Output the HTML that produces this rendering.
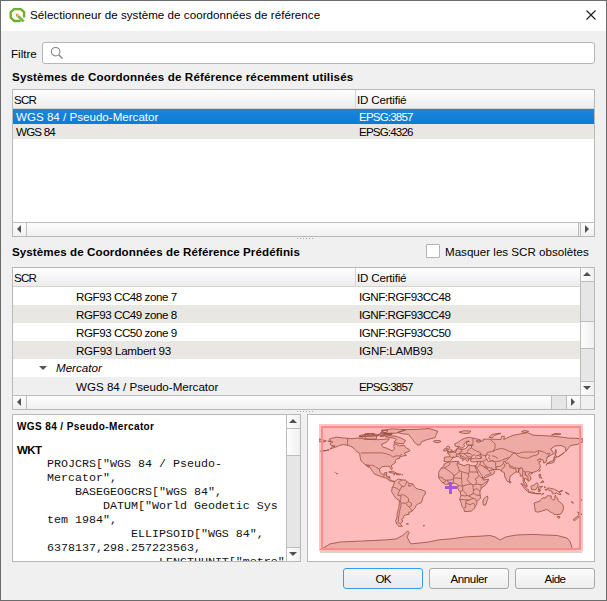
<!DOCTYPE html>
<html><head><meta charset="utf-8">
<style>
*{box-sizing:border-box;margin:0;padding:0}
html,body{width:607px;height:601px;overflow:hidden;background:#f0f0f0}
body{position:relative;font-family:"Liberation Sans",sans-serif;font-size:11.6px;color:#000}
.a{position:absolute}
.t{position:absolute;white-space:nowrap;line-height:14px}
.b{font-weight:bold}
#win{left:0;top:0;width:607px;height:601px;border:1px solid #6c6c6c}
#title{left:1px;top:1px;width:605px;height:30px;background:#fff}
.frame{position:absolute;border:1px solid #b8b8b8;background:#fff}
.hdr{position:absolute;background:linear-gradient(#fff,#ececec);border-bottom:1px solid #d6d2cc}
.sbh{position:absolute;height:14px;border-top:1px solid #bdbdbd;background:#f0f0f0}
.sbv{position:absolute;width:14px;border-left:1px solid #bdbdbd;background:#e6e6e6}
.bh{position:absolute;background:linear-gradient(#fdfdfd,#f0f0f0)}
.bv{position:absolute;background:linear-gradient(90deg,#fdfdfd,#f0f0f0)}
.ln{position:absolute;background:#bdbdbd}
.btn{position:absolute;width:80px;height:21px;border:1px solid #a8a8a8;border-radius:3px;background:linear-gradient(#fcfcfc,#ededed);text-align:center;line-height:19px}
.dots{position:absolute;height:1px;width:16px;background:repeating-linear-gradient(90deg,#a8a8a8 0 1px,transparent 1px 3px)}
.mono{position:absolute;white-space:pre;font-family:"Liberation Mono",monospace;font-size:11.67px;line-height:14px;color:#111}
</style></head><body>
<div id="win" class="a"></div>
<div id="title" class="a"></div>
<!-- QGIS logo -->
<svg class="a" style="left:8px;top:7px" width="19" height="17" viewBox="0 0 19 17">
 <path d="M12.6 14 L6.3 14 L2.7 10.7 L2.7 5.1 L6.1 2.1 L12.9 2.1 L16.1 5.1 L16.1 10.4" fill="none" stroke="#6fae2c" stroke-width="2.4" stroke-linejoin="bevel"/>
 <path d="M10 9 L15.6 14.6" stroke="#7cb843" stroke-width="2.8"/>
 <path d="M7.6 6.6 L11 7 L8.2 10.2 Z" fill="#f0902a"/>
</svg>
<div class="t" style="left:30px;top:8px;letter-spacing:0.04px">Sélectionneur de système de coordonnées de référence</div>
<svg class="a" style="left:585px;top:9px" width="13" height="13" viewBox="0 0 13 13">
 <path d="M1.5 1.5 L10.5 10.5 M10.5 1.5 L1.5 10.5" stroke="#1a1a1a" stroke-width="1.1"/>
</svg>

<!-- Filter -->
<div class="t" style="left:11px;top:47px">Filtre</div>
<div class="a" style="left:42px;top:42px;width:553px;height:22px;border:1px solid #b6b6b6;border-radius:3px;background:#fff"></div>
<svg class="a" style="left:49px;top:46px" width="15" height="15" viewBox="0 0 15 15">
 <circle cx="6.6" cy="5.7" r="4.3" fill="none" stroke="#808080" stroke-width="1.05"/>
 <path d="M9.7 8.8 L13.4 12.5" stroke="#808080" stroke-width="1.3"/>
</svg>

<div class="t b" style="left:12px;top:70px;letter-spacing:0.15px">Systèmes de Coordonnées de Référence récemment utilisés</div>

<!-- Table 1 -->
<div class="frame" style="left:12px;top:89px;width:583px;height:148px"></div>
<div class="hdr" style="left:13px;top:90px;width:581px;height:19px"></div>
<div class="a" style="left:355px;top:90px;width:1px;height:18px;background:#d5d5d5"></div>
<div class="t" style="left:14px;top:93px;letter-spacing:-0.8px">SCR</div>
<div class="t" style="left:357px;top:93px;letter-spacing:-0.2px">ID Certifié</div>
<div class="a" style="left:13px;top:109px;width:581px;height:15px;background:linear-gradient(#1c85da,#0c7cd5)"></div>
<div class="a" style="left:13px;top:124px;width:581px;height:15px;background:#e9e7e3"></div>
<div class="t" style="left:16px;top:110px;color:#fff">WGS 84 / Pseudo-Mercator</div>
<div class="t" style="left:359px;top:110px;color:#fff;letter-spacing:-0.85px">EPSG:3857</div>
<div class="t" style="left:16px;top:125px;letter-spacing:-0.8px">WGS 84</div>
<div class="t" style="left:359px;top:125px;letter-spacing:-0.85px">EPSG:4326</div>
<!-- h scrollbar 1 -->
<div class="sbh" style="left:13px;top:222px;width:581px"></div>
<div class="bh" style="left:13px;top:223px;width:13px;height:13px"></div>
<div class="ln" style="left:26px;top:223px;width:1px;height:13px"></div>
<div class="bh" style="left:27px;top:223px;width:551px;height:13px"></div>
<div class="ln" style="left:578px;top:223px;width:1px;height:13px"></div>
<div class="ln" style="left:580px;top:223px;width:1px;height:13px"></div>
<div class="bh" style="left:581px;top:223px;width:13px;height:13px"></div>
<svg class="a" style="left:13px;top:223px" width="13" height="13"><path d="M4 6 L8 2 L8 10Z" fill="#505050"/></svg>
<svg class="a" style="left:581px;top:223px" width="13" height="13"><path d="M8 6 L4 2 L4 10Z" fill="#505050"/></svg>

<div class="dots" style="left:297px;top:238px"></div>

<div class="t b" style="left:12px;top:245px;letter-spacing:0.08px">Systèmes de Coordonnées de Référence Prédéfinis</div>
<div class="a" style="left:426px;top:244px;width:14px;height:14px;border:1px solid #b2b2b2;border-radius:1px;background:#fff"></div>
<div class="t" style="left:445px;top:245px">Masquer les SCR obsolètes</div>

<!-- Table 2 -->
<div class="frame" style="left:12px;top:267px;width:583px;height:143px"></div>
<div class="hdr" style="left:13px;top:268px;width:567px;height:19px"></div>
<div class="a" style="left:355px;top:268px;width:1px;height:18px;background:#d5d5d5"></div>
<div class="t" style="left:14px;top:271px;letter-spacing:-0.8px">SCR</div>
<div class="t" style="left:357px;top:271px;letter-spacing:-0.2px">ID Certifié</div>
<div class="a" style="left:13px;top:305px;width:567px;height:18px;background:#e9e7e3"></div>
<div class="a" style="left:13px;top:341px;width:567px;height:18px;background:#e9e7e3"></div>
<div class="a" style="left:13px;top:377px;width:567px;height:18px;background:#efefef"></div>
<div class="t" style="left:76px;top:290px;letter-spacing:-0.44px">RGF93 CC48 zone 7</div>
<div class="t" style="left:359px;top:290px;letter-spacing:-0.46px">IGNF:RGF93CC48</div>
<div class="t" style="left:76px;top:308px;letter-spacing:-0.44px">RGF93 CC49 zone 8</div>
<div class="t" style="left:359px;top:308px;letter-spacing:-0.46px">IGNF:RGF93CC49</div>
<div class="t" style="left:76px;top:326px;letter-spacing:-0.44px">RGF93 CC50 zone 9</div>
<div class="t" style="left:359px;top:326px;letter-spacing:-0.46px">IGNF:RGF93CC50</div>
<div class="t" style="left:76px;top:344px;letter-spacing:-0.27px">RGF93 Lambert 93</div>
<div class="t" style="left:359px;top:344px;letter-spacing:-0.15px">IGNF:LAMB93</div>
<svg class="a" style="left:38px;top:365px" width="10" height="6"><path d="M1 1 L9 1 L5 5Z" fill="#555"/></svg>
<div class="t" style="left:56px;top:361px;font-style:italic">Mercator</div>
<div class="t" style="left:76px;top:380px">WGS 84 / Pseudo-Mercator</div>
<div class="t" style="left:359px;top:380px;letter-spacing:-0.85px">EPSG:3857</div>
<!-- v scrollbar 2 -->
<div class="sbv" style="left:580px;top:268px;height:127px"></div>
<div class="bv" style="left:581px;top:268px;width:13px;height:13px"></div>
<div class="ln" style="left:581px;top:281px;width:13px;height:1px"></div>
<div class="ln" style="left:581px;top:321px;width:13px;height:1px"></div>
<div class="bv" style="left:581px;top:322px;width:13px;height:26px"></div>
<div class="ln" style="left:581px;top:348px;width:13px;height:1px"></div>
<div class="ln" style="left:581px;top:381px;width:13px;height:1px"></div>
<div class="bv" style="left:581px;top:382px;width:13px;height:13px"></div>
<svg class="a" style="left:581px;top:268px" width="13" height="13"><path d="M2 8 L10 8 L6 4Z" fill="#505050"/></svg>
<svg class="a" style="left:581px;top:382px" width="13" height="13"><path d="M2 4 L10 4 L6 8Z" fill="#505050"/></svg>
<!-- h scrollbar 2 -->
<div class="sbh" style="left:13px;top:395px;width:581px"></div>
<div class="bh" style="left:13px;top:396px;width:13px;height:13px"></div>
<div class="ln" style="left:26px;top:396px;width:1px;height:13px"></div>
<div class="bh" style="left:27px;top:396px;width:524px;height:13px"></div>
<div class="ln" style="left:551px;top:396px;width:1px;height:13px"></div>
<div class="a" style="left:552px;top:396px;width:14px;height:13px;background:#e6e6e6"></div>
<div class="ln" style="left:566px;top:396px;width:1px;height:13px"></div>
<div class="bh" style="left:567px;top:396px;width:13px;height:13px"></div>
<div class="ln" style="left:580px;top:396px;width:1px;height:13px"></div>
<div class="a" style="left:581px;top:396px;width:13px;height:13px;background:#f0f0f0"></div>
<svg class="a" style="left:13px;top:396px" width="13" height="13"><path d="M4 6 L8 2 L8 10Z" fill="#505050"/></svg>
<svg class="a" style="left:567px;top:396px" width="13" height="13"><path d="M8 6 L4 2 L4 10Z" fill="#505050"/></svg>

<div class="dots" style="left:297px;top:411px"></div>

<!-- Text panel -->
<div class="frame" style="left:12px;top:414px;width:289px;height:148px;overflow:hidden">
 <div class="t b" style="left:4px;top:5px;font-size:10px;letter-spacing:0.4px">WGS 84 / Pseudo-Mercator</div>
 <div class="t b" style="left:4px;top:28px;font-size:11.5px;letter-spacing:-0.6px">WKT</div>
 <div class="mono" style="left:34px;top:42px">PROJCRS["WGS 84 / Pseudo-
Mercator",
    BASEGEOGCRS["WGS 84",
        DATUM["World Geodetic Sys
tem 1984",
            ELLIPSOID["WGS 84",
6378137,298.257223563,
                LENGTHUNIT["metre"</div>
</div>
<div class="sbv" style="left:286px;top:415px;height:146px"></div>
<div class="bv" style="left:287px;top:415px;width:13px;height:13px"></div>
<div class="ln" style="left:287px;top:428px;width:13px;height:1px"></div>
<div class="bv" style="left:287px;top:429px;width:13px;height:26px"></div>
<div class="ln" style="left:287px;top:455px;width:13px;height:1px"></div>
<div class="ln" style="left:287px;top:547px;width:13px;height:1px"></div>
<div class="bv" style="left:287px;top:548px;width:13px;height:13px"></div>
<svg class="a" style="left:287px;top:415px" width="13" height="13"><path d="M2 8 L10 8 L6 4Z" fill="#505050"/></svg>
<svg class="a" style="left:287px;top:548px" width="13" height="13"><path d="M2 4 L10 4 L6 8Z" fill="#505050"/></svg>

<!-- Map panel -->
<div class="frame" style="left:307px;top:414px;width:288px;height:148px"></div>
<svg class="a" style="left:307px;top:414px" width="288" height="148" viewBox="0 0 288 148">
 <rect x="13" y="136" width="262" height="3" fill="#d9d2ca"/>
 <rect x="12" y="10" width="264" height="127" fill="#ffc3c3"/>
 <rect x="14" y="12" width="260" height="123" fill="#ffbcbc"/>
 <clipPath id="cp"><rect x="12" y="10" width="264" height="126"/></clipPath>
 <g clip-path="url(#cp)">
 <path d="M52.3 22.8L56.0 23.2L58.9 21.6L56.0 20.9L52.3 21.6L52.3 22.8ZM57.5 20.2L63.3 20.9L67.7 20.4L66.3 19.5L59.7 19.5L57.5 20.2ZM76.5 20.9L83.9 20.9L85.3 19.9L78.0 19.5L76.5 20.9ZM72.9 22.3L75.8 22.7L78.0 21.4L73.6 21.3L72.9 22.3ZM73.6 18.8L79.5 18.5L80.9 16.7L75.8 16.2L73.6 18.8ZM29.6 60.1L30.5 59.7L29.7 59.2L29.6 60.1ZM27.9 58.5L28.4 58.3L28.1 58.2L27.9 58.5ZM12.0 25.0L15.7 25.9L19.3 26.9L17.9 28.0L12.0 27.6ZM86.6 60.7L88.0 60.8L87.5 60.4L86.6 60.7ZM94.7 60.8L95.9 60.7L95.2 60.4L94.7 60.8ZM99.3 109.8L101.5 109.7L101.1 110.4L99.3 109.8ZM116.1 111.6L117.6 111.7L116.9 112.0L116.1 111.6ZM264.3 87.6L266.5 89.0L266.1 89.2L264.3 88.0ZM274.2 85.8L274.9 85.7L274.8 86.3L274.2 85.8ZM258.4 78.1L261.3 79.5L262.1 80.6L259.1 79.1L258.4 78.1ZM252.5 77.4L255.5 76.3L255.1 77.4L252.9 77.7L252.5 77.4ZM234.6 80.8L237.1 79.4L235.7 79.9L234.6 80.8ZM228.3 79.6L232.0 79.4L234.2 79.5L231.3 79.9L228.3 79.6ZM237.5 72.4L238.2 73.1L237.9 74.1L237.5 72.4ZM237.9 75.6L240.1 75.6L239.3 76.2L237.9 75.6ZM251.1 42.8L254.0 41.0L257.7 38.2L256.9 38.9L251.1 42.8ZM223.6 60.1L225.4 59.6L224.7 59.3L223.6 60.1ZM22.3 35.8L19.3 36.3L15.7 36.8L13.5 37.0L14.9 37.2L19.3 36.6L22.3 35.8ZM23.0 35.0L28.1 33.3L32.5 31.5L36.2 30.5L41.3 31.4L45.0 32.9L47.9 35.4L50.1 37.9L52.7 39.3L53.1 43.2L54.2 47.0L58.2 50.6L60.0 52.0L61.9 53.4L60.4 51.6L61.5 51.3L64.1 55.2L66.6 58.7L67.0 59.7L72.9 62.2L76.5 63.3L79.8 64.3L82.4 66.8L85.7 67.1L87.2 67.9L87.5 67.3L84.6 67.1L83.1 66.1L82.8 62.9L79.5 62.2L79.8 58.3L77.6 58.7L77.3 60.1L75.1 60.4L72.9 58.0L72.5 55.2L75.1 52.7L78.7 52.3L82.4 52.3L83.5 54.4L84.6 55.7L85.3 54.4L84.2 51.6L88.3 48.8L88.3 46.3L89.7 44.9L92.7 44.2L92.7 42.8L95.6 42.1L99.3 41.4L97.1 39.3L100.0 38.2L102.9 36.8L102.2 35.4L99.3 34.0L97.1 31.2L92.7 31.9L87.2 29.4L86.8 32.6L87.5 34.7L85.3 37.2L83.9 36.1L80.2 34.3L76.2 33.3L75.1 31.9L74.7 30.1L79.5 28.3L80.9 26.6L82.4 24.8L78.0 25.2L74.3 25.5L70.7 25.7L64.8 25.5L59.7 25.5L54.5 24.5L50.1 24.1L45.0 24.8L40.6 24.3L35.5 23.9L29.2 23.2L25.2 24.1L22.3 25.2L23.7 26.6L20.8 27.3L25.9 28.0L23.0 29.4L23.7 31.2L28.1 32.2L25.2 32.6L23.0 35.0ZM98.5 26.6L96.3 29.8L91.2 29.4L86.8 28.0L89.7 25.5L86.8 24.1L78.0 22.7L81.7 21.6L89.0 22.3L94.1 24.1L98.5 26.6ZM57.5 24.8L69.2 25.2L69.9 22.0L59.7 21.6L57.5 24.8ZM78.0 19.2L89.0 19.2L98.5 15.6L85.3 14.9L74.3 16.4L78.0 19.2ZM52.3 22.7L59.7 19.9L67.0 19.9L72.1 21.3L63.3 22.3L52.3 22.7ZM70.7 20.9L78.0 20.9L85.3 19.9L74.3 19.2L70.7 20.9ZM90.5 18.5L95.6 19.9L101.5 20.2L103.7 23.4L105.9 25.5L107.3 28.3L111.0 31.2L113.2 30.8L114.7 27.6L120.5 25.5L127.9 23.8L129.3 20.6L130.8 17.1L122.0 14.6L111.0 15.3L100.0 15.6L90.5 18.5ZM126.4 27.3L127.9 26.6L133.0 26.6L134.1 27.6L130.8 28.7L127.9 28.3L126.4 27.3ZM81.7 58.0L85.3 57.1L89.6 59.2L87.2 59.5L81.7 58.0ZM89.4 59.5L93.8 60.2L92.7 60.8L89.4 60.7L89.4 59.5ZM87.2 67.9L91.2 65.0L94.9 65.9L98.5 66.1L100.0 67.5L102.2 69.3L105.9 70.0L107.3 72.2L108.8 74.2L111.7 75.3L115.4 76.0L118.3 77.4L118.3 79.9L116.1 82.7L115.4 85.8L113.9 89.0L111.4 89.7L108.8 91.8L108.4 93.6L105.9 96.1L104.4 97.8L101.8 98.2L102.2 100.3L98.5 101.0L96.3 102.4L96.7 103.5L94.5 106.0L96.0 107.0L93.4 109.5L93.8 110.5L95.6 112.3L91.9 112.3L89.7 110.2L88.6 106.7L90.1 103.1L90.1 99.6L91.6 94.7L92.3 89.7L92.4 86.6L89.0 84.4L86.8 81.3L84.6 77.7L85.0 74.9L85.3 72.8L86.4 71.7L87.2 68.6L87.2 67.9ZM137.0 47.4L137.4 46.0L137.4 43.2L142.5 42.8L142.9 41.0L140.7 39.6L142.9 38.6L145.1 37.9L146.9 37.2L149.9 35.8L150.2 34.3L151.7 32.9L151.7 35.0L154.3 35.4L157.9 35.0L159.4 34.0L161.2 31.5L166.0 31.2L160.5 31.0L159.4 30.5L159.8 28.0L162.3 27.3L160.1 27.1L157.2 29.4L156.8 30.8L157.6 31.9L156.1 33.6L153.5 34.3L152.1 32.2L149.9 32.6L148.0 31.9L147.7 29.8L151.3 28.3L154.3 25.9L157.2 24.5L162.3 23.4L166.0 24.1L168.2 24.6L173.3 25.9L174.1 26.6L168.9 26.9L171.1 28.3L176.3 26.6L176.3 25.2L182.9 25.2L187.3 25.2L193.9 25.5L194.6 22.3L197.5 22.3L196.8 25.5L202.7 22.7L206.3 21.3L213.7 19.9L220.3 18.7L226.9 21.3L235.7 21.6L246.7 22.3L254.0 23.1L261.3 24.1L268.7 24.3L276.0 25.0L276.0 27.6L270.1 30.5L263.5 31.5L258.8 37.5L258.4 33.3L254.0 31.5L248.1 31.9L243.7 35.0L246.7 39.6L240.1 43.4L239.0 48.1L236.8 49.2L236.4 47.0L235.7 45.6L233.1 46.0L233.5 44.7L230.3 46.0L231.6 47.4L233.8 47.4L232.0 49.2L233.3 51.6L233.1 53.7L231.3 55.9L229.4 57.4L225.0 58.7L223.9 58.3L222.1 59.0L221.7 60.8L223.6 62.9L223.9 65.4L221.0 67.4L221.0 66.1L217.7 64.0L217.3 67.5L219.5 69.6L220.3 72.6L218.1 71.5L216.2 67.9L216.1 64.0L215.5 61.9L213.3 62.2L213.2 59.5L211.5 58.3L209.3 58.0L207.4 59.0L202.9 62.6L202.7 66.4L200.8 67.9L199.7 66.4L197.5 61.9L197.4 58.7L195.3 57.6L194.2 57.1L192.8 55.6L189.5 55.7L186.0 55.4L185.3 54.3L181.4 53.7L179.2 52.3L180.7 55.2L181.8 56.4L185.1 56.2L185.3 55.2L187.9 57.6L186.4 60.1L182.5 61.9L177.0 64.3L175.8 64.5L175.3 62.2L172.6 58.3L169.7 53.7L167.8 52.3L169.3 51.3L170.4 49.2L170.4 47.5L166.0 48.0L163.8 47.4L163.3 45.6L165.3 44.6L168.9 43.9L171.9 44.6L174.4 44.2L172.6 42.1L171.1 41.5L169.7 41.8L168.6 42.1L167.1 40.7L165.6 41.5L164.5 43.2L164.5 44.2L163.1 44.7L160.9 45.3L161.6 46.7L160.5 47.7L159.4 46.7L158.3 44.2L153.9 41.4L153.0 42.1L155.7 44.2L157.6 45.3L155.7 46.7L155.5 45.3L152.8 43.9L151.3 42.5L150.2 42.3L148.4 43.2L146.2 42.9L146.2 43.9L144.0 46.0L143.6 46.7L142.5 47.5L140.0 48.1L139.2 47.5L137.0 47.4ZM140.0 38.2L145.1 37.5L145.2 36.3L144.0 35.8L142.5 34.3L142.7 32.9L141.4 32.2L140.3 32.2L139.5 33.6L140.3 34.7L141.8 35.4L140.7 35.9L140.3 37.0L141.8 37.3L140.0 38.2ZM136.7 37.1L139.6 36.7L140.0 35.0L138.1 34.6L136.7 35.4L136.7 37.1ZM140.0 48.1L151.3 47.3L152.1 48.8L151.3 49.7L155.0 50.8L157.9 52.1L158.7 50.9L160.9 50.5L165.3 51.8L167.8 51.5L169.3 52.7L167.8 52.5L170.0 56.7L171.5 60.8L173.0 62.6L175.8 64.7L176.3 66.1L181.6 65.2L181.4 66.2L179.2 70.3L174.1 74.6L173.0 77.0L173.0 80.9L173.7 84.1L169.7 87.3L170.0 90.4L168.1 91.8L167.8 94.0L164.2 97.1L160.1 97.5L157.6 97.6L156.8 94.7L155.0 92.6L154.5 89.7L152.7 85.5L154.0 81.3L153.0 77.7L150.6 74.2L151.0 70.8L150.2 70.3L147.3 69.1L142.5 70.1L138.5 70.4L135.6 68.7L133.0 65.7L131.5 63.1L131.9 59.7L131.5 58.7L133.0 56.2L134.1 54.1L136.8 52.5L137.0 50.2L139.0 49.5L140.0 48.1ZM180.3 82.0L181.0 84.4L180.5 85.5L178.5 91.1L176.3 91.1L175.9 88.7L176.6 84.8L178.5 83.4L180.3 82.0ZM227.2 89.0L227.6 92.2L228.3 97.3L230.5 98.2L234.2 97.3L238.6 95.8L240.4 95.7L243.4 98.1L245.2 98.5L246.7 100.2L249.6 100.7L252.2 100.3L254.0 99.8L256.2 95.7L256.6 93.3L256.2 91.5L254.4 89.2L251.1 86.9L250.6 84.1L249.2 83.4L248.5 81.1L247.8 82.7L247.8 85.5L246.7 86.1L243.7 84.1L244.5 82.1L241.2 81.6L239.3 82.5L238.6 84.1L236.0 83.7L233.5 85.8L232.7 87.3L229.8 88.0L227.2 89.0ZM250.3 102.3L252.8 102.4L252.5 104.0L251.4 104.3L250.3 103.1L250.3 102.3ZM270.6 97.8L272.0 98.9L274.9 100.1L273.8 101.2L272.3 102.8L272.0 101.6L271.5 101.2L272.0 100.0L270.6 97.8ZM270.6 102.1L271.8 102.9L270.5 104.4L269.4 105.2L267.9 106.4L266.1 106.0L267.2 104.5L269.8 103.0L270.6 102.1ZM239.3 51.3L240.4 49.5L243.0 49.3L244.5 49.2L246.7 48.5L247.4 46.7L248.1 45.3L247.8 44.4L246.7 44.9L246.3 46.7L244.1 47.4L241.5 48.5L239.9 49.4L239.3 51.3ZM246.7 44.2L247.8 43.5L250.7 42.9L248.1 41.4L246.7 44.2ZM248.1 41.0L249.2 38.9L248.9 35.4L248.1 36.8L248.1 41.0ZM232.1 57.6L233.3 56.2L233.1 55.6L232.1 56.7L232.1 57.6ZM232.0 60.4L233.7 60.4L233.5 62.2L234.9 64.3L232.4 63.6L232.0 60.4ZM233.5 68.6L236.8 68.2L236.0 66.6L234.6 67.5L233.5 68.6ZM223.9 72.4L224.7 75.6L228.0 75.8L229.4 74.9L230.5 72.8L231.3 70.0L229.8 68.6L228.7 70.0L226.9 71.2L224.3 72.1L223.9 72.4ZM213.9 69.6L215.5 69.8L217.7 72.4L220.3 74.6L221.7 76.0L221.7 77.6L219.0 76.3L217.3 74.2L215.9 72.1L213.9 69.6ZM221.4 78.3L223.2 77.9L225.4 78.1L228.0 78.9L228.0 79.6L224.7 79.1L221.4 78.3ZM231.3 77.4L231.6 73.1L232.7 72.6L235.7 72.4L233.5 74.1L232.7 74.9L233.5 76.9L232.4 76.0L232.4 77.4L231.3 77.4ZM240.1 74.2L242.3 74.1L245.2 74.6L247.4 75.3L250.9 77.0L252.2 77.9L254.0 80.8L251.8 80.2L249.6 79.0L247.4 79.9L245.2 79.3L245.1 77.4L241.9 76.3L240.8 75.5L240.1 74.2ZM202.5 68.9L202.7 66.7L204.0 68.2L203.6 69.1L202.5 68.9ZM152.1 18.1L156.5 19.5L162.3 19.2L163.8 17.1L157.2 16.7L152.1 18.1ZM182.1 23.4L185.1 23.8L188.0 21.3L193.9 19.3L189.5 19.5L184.3 20.9L182.1 23.4ZM214.4 17.8L218.8 18.5L221.7 17.4L217.3 16.4L214.4 17.8ZM244.5 20.9L251.1 20.6L254.0 19.9L248.1 19.5L244.5 20.9ZM12.0 137.0L14.9 134.9L23.0 129.9L33.3 128.0L55.3 127.0L77.3 126.0L89.0 125.0L95.6 121.5L101.0 117.0L102.2 118.7L100.0 122.9L103.7 129.9L111.0 129.2L121.3 128.0L133.0 125.7L143.0 125.0L158.7 122.9L173.3 122.2L182.9 121.5L188.0 122.9L193.1 126.0L199.0 122.9L209.3 121.0L224.7 120.4L237.9 121.0L250.3 121.5L259.9 124.0L262.8 127.1L265.0 133.5L267.2 137.0Z" fill="#eeaba5" stroke="#9c5042" stroke-width="0.85" stroke-linejoin="round"/>
 <path d="M178.5 41.8L180.7 40.7L182.9 41.8L181.4 43.9L182.5 45.3L183.6 47.4L180.7 47.4L179.9 44.9L178.8 43.9L178.5 41.8Z" fill="#ffbcbc" stroke="#9c5042" stroke-width="0.75"/>
 <path d="M53.8 38.9L74.3 38.9L78.7 39.6L83.1 41.0L86.1 43.2L89.0 41.8L92.7 41.8L94.9 40.0M40.6 31.2L40.6 24.3M58.2 50.6L62.6 51.4L65.9 51.1L68.5 53.0L71.0 54.4L72.7 55.2M76.5 63.3L77.3 60.9L78.7 60.9L79.2 60.4M82.8 62.9L80.2 64.3L81.3 65.7M85.3 72.8L89.0 73.9L92.7 76.3L90.5 81.3L93.4 81.3L94.1 84.1L93.0 86.2M94.9 65.9L91.2 68.6L94.9 72.1L92.7 76.3M100.0 67.5L98.5 70.7L97.1 72.8L94.9 72.1M102.2 69.3L101.5 72.1L104.0 71.9L105.9 70.0M93.0 86.2L94.1 89.0L95.6 89.0L98.5 89.4L101.5 87.6L101.5 84.8L100.0 83.0L96.3 80.6L93.4 81.3M94.1 89.0L93.8 92.6L92.7 96.8L91.6 103.1L91.2 108.8L93.4 110.2M98.5 89.4L101.5 92.6L104.4 91.8L104.4 89.0L101.5 87.6M101.5 92.6L103.7 94.7L105.1 97.3M137.6 54.0L140.3 52.3L142.5 50.9L142.9 48.8M134.5 54.1L137.6 54.0L140.5 55.9L146.2 60.1L146.9 62.2L152.8 56.9L154.3 57.6L161.6 59.7L161.6 59.4L162.3 58.0L162.3 51.3M151.0 47.4L149.9 50.9L151.0 52.3L152.4 56.9L152.8 56.9M161.6 59.4L161.6 62.9L160.5 64.3L160.1 65.7L161.6 67.5L164.2 70.0L166.7 71.0L168.9 70.3L170.4 70.3L174.1 70.7L174.8 70.7L176.3 70.0L179.2 67.9L181.4 66.2M162.3 58.0L171.1 58.0M131.5 63.1L135.2 63.3L135.6 64.7L138.5 66.1L140.3 66.1L142.2 66.1L144.7 65.7L146.6 65.4L146.2 64.0L146.9 62.2M135.6 68.7L138.1 67.9L138.5 66.1M140.3 66.1L141.8 70.0M146.6 65.4L146.0 69.1M146.2 64.0L149.9 64.0L152.8 64.3L154.6 64.7L155.0 67.9L154.6 69.3L155.7 72.1L155.7 76.3L153.0 77.7M154.6 64.7L154.3 57.6M155.7 72.1L161.6 70.3L164.2 70.0M151.0 71.9L152.3 71.9L153.5 71.9L155.7 72.1M155.7 76.3L157.9 78.4L160.1 81.3L161.6 82.0L166.0 79.5L166.7 76.0L166.0 74.2L166.0 71.0M154.0 81.3L158.7 82.0L160.1 81.3M152.7 85.5L158.7 85.8L162.3 86.1L159.4 86.2L158.7 89.0L158.7 91.1L158.7 93.6L156.8 93.7M162.3 86.1L166.0 84.4L168.2 84.8L169.7 87.3M161.6 82.0L164.5 83.4L166.0 84.4M166.7 76.0L169.7 74.6L173.0 77.0M166.0 79.5L168.2 80.2L169.7 81.3L173.7 81.3M158.7 89.0L163.1 90.8L165.3 89.4L166.7 89.2L168.1 91.8M168.9 70.3L169.7 67.1L168.2 65.0L170.8 63.3L171.9 61.5M174.1 70.7L174.1 74.6M142.7 42.9L146.2 43.5M145.1 37.9L148.4 38.6L149.9 40.0L149.1 42.5L150.2 42.3M148.4 38.6L150.2 34.3M154.3 35.4L155.0 37.5L152.8 38.2L153.5 39.3L151.3 40.0L149.9 40.0M153.5 39.3L156.5 39.6L160.1 39.3L163.1 39.6L165.3 41.5M151.3 40.0L153.9 41.4M160.1 39.3L160.9 36.8L161.6 35.4L164.5 34.0L164.5 31.5M156.5 39.6L157.9 40.3L160.5 42.5L164.5 43.2M158.3 44.2L159.4 43.5L160.9 44.2L163.1 44.7M166.0 31.2L166.0 24.1M164.5 34.0L167.5 36.1L168.9 36.8L173.3 38.6L174.4 44.2M171.1 41.5L173.3 40.3L178.5 41.8M178.5 41.8L180.7 38.2L185.8 37.5L188.7 35.8L194.6 34.3L198.3 35.4L202.7 37.5L207.8 38.9L204.9 40.3L204.1 41.8L202.7 43.2L198.3 44.9L195.3 46.0L193.1 47.0L188.7 47.7L184.3 46.7L183.6 47.4M207.8 38.9L211.5 39.6L215.1 38.2L221.7 37.9L227.6 38.2L232.0 36.5L237.1 38.2L240.1 40.0L243.0 39.3L240.1 43.4M207.8 38.9L210.7 41.8L214.4 43.5L221.0 44.2L226.1 41.8L229.8 41.0L231.3 40.0L232.0 36.5M202.7 43.2L198.3 47.4L199.0 49.5L201.2 48.8L202.7 51.6L207.8 53.7L211.5 54.4L215.1 53.7L215.9 56.6L218.1 58.0L221.7 57.6L223.2 58.3M198.3 47.4L196.4 47.7L196.1 49.5L195.3 50.9L192.8 52.3L189.5 52.7L188.7 55.7M196.1 49.5L198.3 50.9L196.8 53.7L195.3 54.4L194.2 57.1M202.7 51.6L202.7 53.2L204.9 54.1L208.5 54.8M208.5 54.8L209.3 58.0M211.5 54.4L211.5 58.0M211.5 58.0L212.2 55.9L213.7 53.7M215.9 56.6L215.5 61.9M218.1 58.0L218.8 60.8L221.0 62.9L221.0 66.1M217.3 59.4L218.1 60.8L220.3 62.2M179.2 52.3L177.0 49.5L176.3 47.4L174.1 47.4L170.4 47.5M176.3 47.4L177.7 46.0L179.2 45.6L179.9 44.9M174.1 47.4L172.6 50.6L171.1 52.7L169.7 53.7M172.6 50.6L178.5 53.0L179.2 52.3M176.3 52.7L180.7 55.5M175.8 64.5L178.5 61.5L182.5 60.1L184.3 59.4L182.1 57.3L181.8 56.4M184.3 46.7L185.8 46.7L188.7 48.5L188.7 52.3L189.3 55.7M190.9 44.6L188.0 42.5L185.1 41.8M182.9 25.2L188.0 29.8L188.0 34.0L185.8 37.5" fill="none" stroke="#9c5042" stroke-width="0.75"/>
 </g>
 <rect x="15" y="13" width="258" height="122" fill="none" stroke="#ff8a8a" stroke-width="2"/>
 <rect x="142" y="68" width="3" height="12" fill="#a955e2"/>
 <rect x="138" y="72" width="12" height="3" fill="#a955e2"/>
</svg>

<!-- Buttons -->
<div class="btn" style="left:343px;top:568px;border-color:#3d9ae6;background:linear-gradient(#f4f6f9,#e5eaf1);letter-spacing:-1px">OK</div>
<div class="btn" style="left:429px;top:568px;letter-spacing:-0.4px">Annuler</div>
<div class="btn" style="left:515px;top:568px;letter-spacing:-0.6px">Aide</div>
</body></html>
